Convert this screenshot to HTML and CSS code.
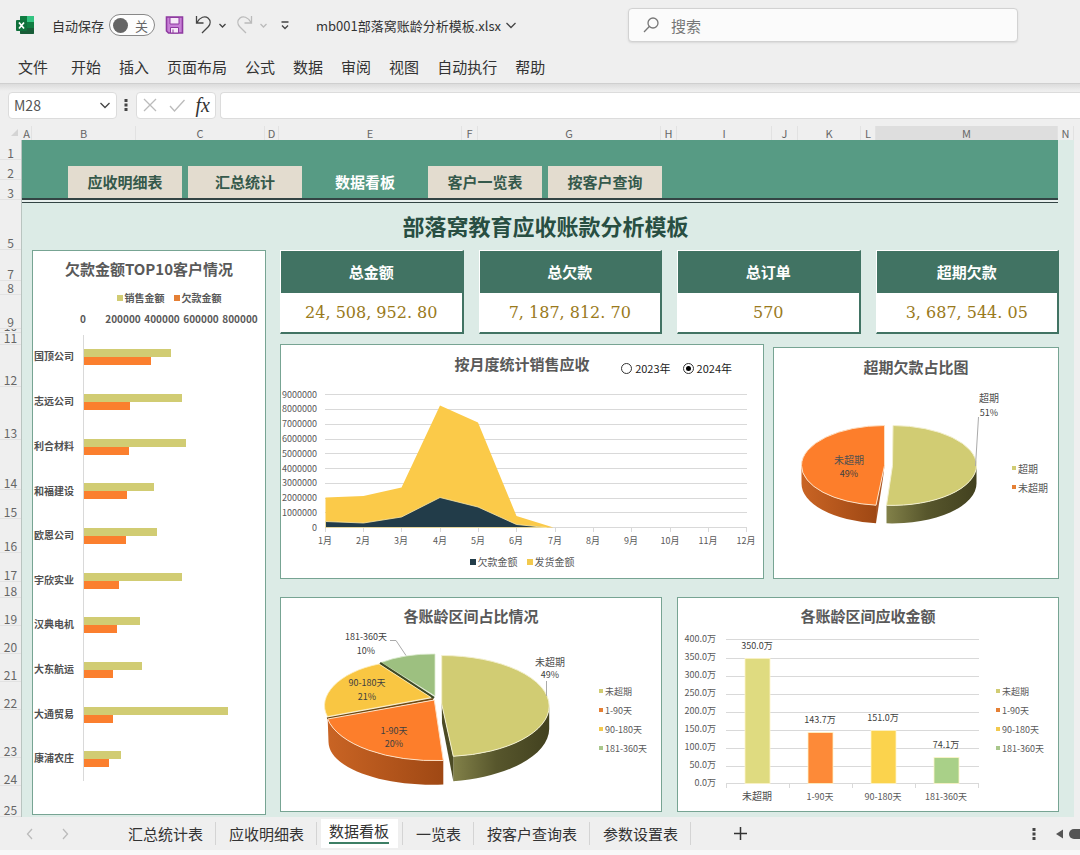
FILE: index.html
```html
<!DOCTYPE html>
<html lang="zh-CN">
<head>
<meta charset="utf-8">
<meta name="viewport" content="width=device-width, initial-scale=1">
<title>mb001部落窝账龄分析模板.xlsx</title>
<link rel="stylesheet" href="styles.css">
</head>
<body>
<header class="titlebar">
  <svg class="logo" width="18" height="18" viewBox="0 0 18 18" aria-hidden="true">
    <rect x="4" y="0" width="14" height="18" rx="1" fill="#21a366"/>
    <path d="M4 1q0-1 1-1h6v6H4z" fill="#107c41"/><path d="M11 0h6q1 0 1 1v5h-7z" fill="#33c481"/>
    <path d="M4 12h14v5q0 1-1 1H5q-1 0-1-1z" fill="#185c37"/><path d="M11 6h7v6h-7z" fill="#107c41"/>
    <rect x="0" y="4" width="11" height="11" rx="1" fill="#0f703b"/>
    <path d="M3 6.5l5 6M8 6.5l-5 6" stroke="#fff" stroke-width="1.7" fill="none"/>
  </svg>
  <label for="autosave" class="autosave">自动保存</label>
  <label class="toggle"><input type="checkbox" id="autosave"><span>关</span></label>
  <button class="icon" aria-label="保存"><svg width="20" height="20" viewBox="0 0 20 20"><path d="M1.5 2h16v16h-14l-2-2z" fill="#c77fd6" stroke="#8e3aa0" stroke-width="1.6"/><path d="M5 2.500h9v6.500H5z" fill="#f6eaf8" stroke="#8e3aa0"/><path d="M5.500 18v-5.500h8V18z" fill="#f6eaf8" stroke="#8e3aa0"/><path d="M8 14.500V18" stroke="#8e3aa0"/></svg></button>
  <button class="icon" aria-label="撤销"><svg width="22" height="22" viewBox="0 0 22 22" class="line"><path d="M2.500 2v7H9.500M3 8.500C6 3 11 1.500 14 4c3 2.500 2.500 6 .5 8.500L8 19"/></svg></button>
  <button class="icon" aria-label="撤销选项"><svg width="9" height="9" viewBox="0 0 9 9" class="line"><path d="M1.500 3l3 3 3-3"/></svg></button>
  <button class="icon" aria-label="恢复"><svg width="22" height="22" viewBox="0 0 22 22" class="line faded"><path d="M16.500 2v7H9.500M16 8.500C13 3 8 1.500 5 4c-3 2.500-2.500 6-.5 8.500L11 19"/></svg></button>
  <button class="icon" aria-label="恢复选项"><svg width="9" height="9" viewBox="0 0 9 9" class="line faded"><path d="M1.500 3l3 3 3-3"/></svg></button>
  <button class="icon" aria-label="自定义"><svg width="10" height="10" viewBox="0 0 10 10" class="line"><path d="M1.500 2h7M2 5.500l3 3 3-3"/></svg></button>
  <button class="filename">mb001部落窝账龄分析模板.xlsx<svg width="12" height="12" viewBox="0 0 12 12" class="line"><path d="M1.500 4l4.500 4.500L10.500 4"/></svg></button>
  <div class="search">
    <svg width="18" height="18" viewBox="0 0 18 18" class="line grey"><circle cx="11" cy="7" r="5"/><path d="M7.300 10.500L2 16"/></svg>
    <input type="search" placeholder="搜索" aria-label="搜索">
  </div>
</header>
<nav class="menu" aria-label="功能区">
  <button class="file">文件</button><button>开始</button><button>插入</button><button>页面布局</button><button>公式</button><button>数据</button><button>审阅</button><button>视图</button><button>自动执行</button><button>帮助</button>
</nav>
<div class="formulabar">
  <div class="namebox"><input type="text" value="M28" aria-label="名称框"><svg width="12" height="12" viewBox="0 0 12 12" class="line"><path d="M1.500 4l4.500 4.500L10.500 4"/></svg></div>
  <svg class="grip" width="4" height="14" viewBox="0 0 4 14" fill="#444"><path d="M.5 1h3v3h-3zM.5 5.500h3v3h-3zM.5 10h3v3h-3z"/></svg>
  <div class="fxbox">
    <button class="icon" aria-label="取消"><svg width="16" height="16" viewBox="0 0 16 16" class="line faded"><path d="M2 2l12 12M14 2L2 14"/></svg></button>
    <button class="icon" aria-label="输入"><svg width="18" height="16" viewBox="0 0 18 16" class="line faded"><path d="M2 9l4.500 5L16.500 3"/></svg></button>
    <button class="icon fx" aria-label="插入函数">fx</button>
  </div>
  <input class="formula" type="text" aria-label="编辑栏">
</div>

<main class="sheet">
  <div class="corner"><svg width="7" height="7" viewBox="0 0 7 7"><path d="M7 0v7H0z" fill="#d4d4d4"/></svg></div>
  <div class="cols"><span>A</span><span>B</span><span>C</span><span>D</span><span>E</span><span>F</span><span>G</span><span>H</span><span>I</span><span>J</span><span>K</span><span>L</span><span class="picked">M</span><span>N</span></div>
  <div class="rows"><span>1</span><span>2</span><span>3</span><span>5</span><span>7</span><span>8</span><span>9</span><span class="thin">10</span><span>11</span><span>12</span><span>13</span><span>14</span><span>15</span><span>16</span><span>17</span><span>18</span><span>19</span><span>20</span><span>21</span><span>22</span><span>23</span><span>24</span><span>25</span></div>
  <div class="canvas">
    <nav class="banner" aria-label="看板导航">
      <a href="#detail">应收明细表</a><a href="#summary">汇总统计</a><a href="#board" class="current">数据看板</a><a href="#clients">客户一览表</a><a href="#query">按客户查询</a>
    </nav>
    <h1>部落窝教育应收账款分析模板</h1>
    <div class="dashboard">
      <section class="panel top10">
        <h2>欠款金额TOP10客户情况</h2>
        <ul class="legend row bold"><li class="olive">销售金额</li><li class="orange">欠款金额</li></ul>
        <svg class="plot" viewBox="33 305 232 509" role="img" aria-label="欠款金额TOP10客户情况">
          <g class="num bold mid"><text x="83" y="323">0</text><text x="123" y="323">200000</text><text x="162" y="323">400000</text><text x="201" y="323">600000</text><text x="240" y="323">800000</text></g>
          <path d="M83.500 335V781" stroke="#d9d9d9"/>
          <g fill="#d1cc73"><rect x="84" y="349" width="87" height="8"/><rect x="84" y="394" width="98" height="8"/><rect x="84" y="439" width="102" height="8"/><rect x="84" y="483" width="70" height="8"/><rect x="84" y="528" width="73" height="8"/><rect x="84" y="573" width="98" height="8"/><rect x="84" y="617" width="56" height="8"/><rect x="84" y="662" width="58" height="8"/><rect x="84" y="707" width="144" height="8"/><rect x="84" y="751" width="37" height="8"/></g>
          <g fill="#fb7f2e"><rect x="84" y="357" width="67" height="8"/><rect x="84" y="402" width="46" height="8"/><rect x="84" y="447" width="45" height="8"/><rect x="84" y="491" width="43" height="8"/><rect x="84" y="536" width="42" height="8"/><rect x="84" y="581" width="35" height="8"/><rect x="84" y="625" width="33" height="8"/><rect x="84" y="670" width="29" height="8"/><rect x="84" y="715" width="29" height="8"/><rect x="84" y="759" width="25" height="8"/></g>
          <g class="cjk bold"><text x="34" y="360">国顶公司</text><text x="34" y="405">志远公司</text><text x="34" y="450">利合材料</text><text x="34" y="495">和福建设</text><text x="34" y="539">欧恩公司</text><text x="34" y="584">宇欣实业</text><text x="34" y="628">汉典电机</text><text x="34" y="673">大东航运</text><text x="34" y="718">大通贸易</text><text x="34" y="762">康浦农庄</text></g>
        </svg>
      </section>

      <div class="right">
        <div class="cards">
          <section class="card"><h3>总金额</h3><p>24, 508, 952. 80</p></section>
          <section class="card"><h3>总欠款</h3><p>7, 187, 812. 70</p></section>
          <section class="card"><h3>总订单</h3><p>570</p></section>
          <section class="card"><h3>超期欠款</h3><p>3, 687, 544. 05</p></section>
        </div>

        <div class="middle">
          <section class="panel">
            <div class="head">
              <h2>按月度统计销售应收</h2>
              <div class="years" role="radiogroup" aria-label="年份">
                <label><input type="radio" name="year">2023年</label>
                <label><input type="radio" name="year" checked>2024年</label>
              </div>
            </div>
            <svg class="plot" viewBox="281 383 482 167" role="img" aria-label="按月度统计销售应收">
              <path d="M325 394.500H747M325 409.500H747M325 424.500H747M325 439.500H747M325 453.500H747M325 468.500H747M325 483.500H747M325 498.500H747M325 512.500H747M325 527.500H747M325.500 528v4M363.500 528v4M401.500 528v4M440.500 528v4M478.500 528v4M516.500 528v4M555.500 528v4M593.500 528v4M631.500 528v4M670.500 528v4M708.500 528v4M746.500 528v4" stroke="#d9d9d9" fill="none"/>
              <path d="M325.500 497.500L363.500 496l38-8.500L440 405.500l38 17L516.500 516l37 11.500h-228z" fill="#fbca49"/>
              <path d="M325.500 521.500l38 1.500 38-6L440 497.500l38 9.500 38.500 17.500 30 3h-221z" fill="#223c49" stroke="#fbe9a8" stroke-width=".8"/>
              <g class="num end"><text x="317" y="398">9000000</text><text x="317" y="412">8000000</text><text x="317" y="427">7000000</text><text x="317" y="442">6000000</text><text x="317" y="457">5000000</text><text x="317" y="472">4000000</text><text x="317" y="486">3000000</text><text x="317" y="501">2000000</text><text x="317" y="516">1000000</text><text x="317" y="531">0</text></g>
              <g class="num mid"><text x="325" y="544">1月</text><text x="363" y="544">2月</text><text x="401" y="544">3月</text><text x="440" y="544">4月</text><text x="478" y="544">5月</text><text x="516" y="544">6月</text><text x="555" y="544">7月</text><text x="593" y="544">8月</text><text x="631" y="544">9月</text><text x="670" y="544">10月</text><text x="708" y="544">11月</text><text x="746" y="544">12月</text></g>
            </svg>
            <ul class="legend row"><li class="navy">欠款金额</li><li class="yellow">发货金额</li></ul>
          </section>

          <section class="panel ratio">
            <div class="head"><h2>超期欠款占比图</h2></div>
            <div class="split">
              <svg class="plot" viewBox="774 386 230 192" role="img" aria-label="超期欠款占比图">
                <defs>
                  <linearGradient id="oliveSide"><stop offset="0" stop-color="#828149"/><stop offset=".45" stop-color="#57562c"/><stop offset="1" stop-color="#42411f"/></linearGradient>
                  <linearGradient id="orangeSide"><stop offset="0" stop-color="#c96424"/><stop offset="1" stop-color="#9f4814"/></linearGradient>
                </defs>
                <path d="M976.500 465.500A84.500 40 0 0 1 886.500 505.300V523.300A84.500 40 0 0 0 976.500 483z" fill="url(#oliveSide)"/>
                <path d="M893 425.500A84.500 40 0 0 1 976.500 465.500A84.500 40 0 0 1 886.500 505.300L892.500 465.500z" fill="#d1cc73" stroke="#f3f0cf"/>
                <path d="M801.500 465.500A83 40 0 0 0 876 505.200V523.200A83 40 0 0 1 801.500 483z" fill="url(#orangeSide)"/>
                <path d="M884.500 465.500L876 505.200V523.200L883 478z" fill="#a85423"/>
                <path d="M884.500 425.500V465.500L876 505.200A83 40 0 0 1 801.500 465.500A83 40 0 0 1 884.500 425.500z" fill="#fd7e2b" stroke="#fde0c4"/>
                <path d="M978.500 417l-3 49" stroke="#aaa" fill="none"/>
                <g class="cjk mid"><text x="989" y="402">超期</text><text x="849" y="464">未超期</text></g>
                <g class="num mid dark"><text x="989" y="416">51%</text><text x="849" y="477">49%</text></g>
              </svg>
              <ul class="legend side"><li class="olive">超期</li><li class="orange">未超期</li></ul>
            </div>
          </section>
        </div>

        <div class="bottom">
          <section class="panel">
            <div class="head"><h2>各账龄区间占比情况</h2></div>
            <div class="split">
              <svg class="plot" viewBox="281 634 314 177" role="img" aria-label="各账龄区间占比情况">
                <path d="M381 662.500Q405 653.500 435 654V696z" fill="#9dc080" stroke="#dcebcf" stroke-width=".8"/>
                <path d="M380 663L434 698" stroke="#3e4a24" stroke-width="2.500"/>
                <path d="M327.500 716.500C316 696 339 672 379 664L431 697.500z" fill="#f9c642" stroke="#fdeebb" stroke-width=".8"/>
                <path d="M327 718.500L433 699" stroke="#6e4a12" stroke-width="2"/>
                <path d="M327.700 719A109 51 0 0 0 443.300 760.500V784.500C385 787 329 769 328.500 742z" fill="url(#orangeSide)"/>
                <path d="M434.300 700L443.300 760.500A109 51 0 0 1 327.700 719z" fill="#fd7e2b" stroke="#fde0c4"/>
                <path d="M549.200 706A107.500 50.500 0 0 1 453.300 756.300V781.300C510 777 549 754 549.200 729z" fill="url(#oliveSide)"/>
                <path d="M441.700 703L453.300 756.500V781L442 723z" fill="#4c4b25"/>
                <path d="M441.700 655.500A107.500 50.500 0 0 1 549.200 706A107.500 50.500 0 0 1 453.300 756.300L441.700 704z" fill="#d1cc73" stroke="#f3f0cf"/>
                <path d="M390 640.500h6l10 15M546.500 681v15" stroke="#aaa" fill="none"/>
                <g class="num mid dark"><text x="366" y="640">181-360天</text><text x="366" y="654">10%</text><text x="367" y="686">90-180天</text><text x="367" y="700">21%</text><text x="394" y="734">1-90天</text><text x="394" y="747">20%</text><text x="550" y="678">49%</text></g>
                <text class="cjk mid" x="550" y="666">未超期</text>
              </svg>
              <ul class="legend side"><li class="olive">未超期</li><li class="orange">1-90天</li><li class="yellow">90-180天</li><li class="green">181-360天</li></ul>
            </div>
          </section>

          <section class="panel">
            <div class="head"><h2>各账龄区间应收金额</h2></div>
            <div class="split">
              <svg class="plot" viewBox="678 634 314 177" role="img" aria-label="各账龄区间应收金额">
                <path d="M726 639.500H979M726 658.500H979M726 676.500H979M726 694.500H979M726 712.500H979M726 730.500H979M726 748.500H979M726 766.500H979M726 783.500H979M726.500 784v4M789.500 784v4M852.500 784v4M915.500 784v4M978.500 784v4" stroke="#d9d9d9" fill="none"/>
                <g stroke="#fff6c9" stroke-width=".8"><rect x="745" y="658.500" width="25" height="125" fill="#dfdb80"/><rect x="808" y="732.500" width="25" height="51" fill="#fd8a38"/><rect x="871" y="730.500" width="25" height="53" fill="#fbd34d"/><rect x="934" y="757.500" width="25" height="26" fill="#a9d088"/></g>
                <g class="num end"><text x="716" y="642">400.0万</text><text x="716" y="660">350.0万</text><text x="716" y="678">300.0万</text><text x="716" y="696">250.0万</text><text x="716" y="714">200.0万</text><text x="716" y="732">150.0万</text><text x="716" y="750">100.0万</text><text x="716" y="768">50.0万</text><text x="716" y="786">0.0万</text></g>
                <g class="num mid dark"><text x="757" y="649">350.0万</text><text x="820" y="723">143.7万</text><text x="883" y="721">151.0万</text><text x="946" y="748">74.1万</text></g>
                <g class="num mid"><text class="cjk" x="757" y="800">未超期</text><text x="820" y="800">1-90天</text><text x="883" y="800">90-180天</text><text x="946" y="800">181-360天</text></g>
              </svg>
              <ul class="legend side"><li class="olive">未超期</li><li class="orange">1-90天</li><li class="yellow">90-180天</li><li class="green">181-360天</li></ul>
            </div>
          </section>
        </div>
      </div>
    </div>
  </div>
</main>

<footer class="tabs">
  <button class="icon" aria-label="上一个"><svg width="8" height="12" viewBox="0 0 8 12" class="line faded"><path d="M6 1L1.500 6 6 11"/></svg></button>
  <button class="icon" aria-label="下一个"><svg width="8" height="12" viewBox="0 0 8 12" class="line faded"><path d="M2 1l4.500 5L2 11"/></svg></button>
  <nav class="tablist" aria-label="工作表">
    <button>汇总统计表</button><button>应收明细表</button><button class="active"><span>数据看板</span></button><button class="after">一览表</button><button>按客户查询表</button><button>参数设置表</button>
  </nav>
  <button class="icon add" aria-label="新建工作表"><svg width="13" height="13" viewBox="0 0 13 13" stroke="#333" stroke-width="1.500"><path d="M6.500 0v13M0 6.500h13"/></svg></button>
  <svg class="dots" width="4" height="14" viewBox="0 0 4 14" fill="#444"><path d="M.5 1h3v3h-3zM.5 5.500h3v3h-3zM.5 10h3v3h-3z"/></svg>
  <svg class="scroll" width="24" height="10" viewBox="0 0 24 10" fill="#555"><path d="M7 .5v9L0 5z"/><rect x="13" y="0" width="16" height="10" rx="5"/></svg>
</footer>
</body>
</html>
```
FILE: styles.css
```css
* { box-sizing: border-box; }
body {
  margin: 0;
  background: #f8f8f8;
  color: #333;
  font-family: "Noto Sans CJK SC", "Open Sans", sans-serif;
  font-size: 15px;
  overflow-x: hidden;
}
button, input { font: inherit; color: inherit; }
button { border: 0; padding: 0; background: none; white-space: nowrap; }
h1, h2, h3, p, ul { margin: 0; padding: 0; }
svg { display: block; flex: none; }
.icon { display: flex; align-items: center; }
.line { fill: none; stroke: #444; stroke-width: 1.3; }
.faded { stroke: #bbb; }
.grey { stroke: #777; }

/* Window chrome */
.titlebar {
  display: grid;
  grid-template-columns: 36px 57px 56px 29px 24px 17px 24px 21px 36px minmax(212px, 312px) minmax(120px, 390px);
  align-items: center;
  height: 50px;
  padding: 0 16px;
  background: #efefef;
  font-size: 13px;
}
.autosave { white-space: nowrap; }
.toggle {
  display: flex;
  align-items: center;
  gap: 7px;
  width: 46px;
  height: 22px;
  padding: 0 3px;
  border: 1px solid #888;
  border-radius: 11px;
  background: #fdfdfd;
  color: #666;
}
.toggle input {
  appearance: none;
  width: 15px;
  height: 15px;
  margin: 0;
  border-radius: 50%;
  background: #666;
}
.filename { display: flex; align-items: center; gap: 4px; }
.search {
  display: flex;
  align-items: center;
  gap: 11px;
  height: 34px;
  padding: 0 13px;
  border: 1px solid #d2d2d2;
  border-radius: 4px;
  background: #fbfbfb;
  box-shadow: 0 1px 2px #d8d8d8;
}
.search input { flex: 1; min-width: 0; padding: 0; border: 0; outline: 0; background: none; font-size: 15px; }
.search input::placeholder { color: #777; opacity: 1; }
.menu {
  display: flex;
  align-items: center;
  gap: 18px;
  height: 34px;
  padding-left: 18px;
  background: #efefef;
  border-bottom: 1px solid #cfcfcf;
}
.menu .file { margin-right: 5px; }
.formulabar {
  display: flex;
  align-items: center;
  height: 42px;
  padding-left: 8px;
  background: linear-gradient(#dcdcdc, #efefef 7px);
}
.namebox, .fxbox, .formula { height: 27px; border: 1px solid #dcdcdc; border-radius: 4px; background: #fff; }
.namebox { display: flex; align-items: center; width: 109px; padding: 0 5px; }
.namebox input { flex: 1; min-width: 0; padding: 0; border: 0; background: none; font-size: 14px; color: #555; }
.grip { margin: 0 6px 0 7px; }
.fxbox { display: flex; align-items: center; justify-content: space-between; width: 80px; margin-left: 2px; padding: 0 5px; }
.fx { font-family: "Liberation Serif", serif; font-style: italic; font-size: 20px; color: #333; }
.formula { flex: 1; min-width: 0; margin-left: 4px; border-right: 0; border-radius: 4px 0 0 4px; }

/* Worksheet grid */
.sheet { display: grid; grid-template-columns: 22px minmax(0, 1fr); padding-right: 6px; background: #efefef; }
.corner { display: flex; justify-content: flex-end; align-items: flex-end; padding: 0 4px 4px 0; }
.cols {
  display: grid;
  grid-template-columns: 10fr 104fr 129fr 14fr 183fr 16fr 183fr 16fr 95fr 26fr 63fr 15fr 182fr 16fr;
  height: 14px;
  font-size: 11px;
  line-height: 15px;
  color: #666;
}
.cols span { display: flex; justify-content: center; min-width: 0; border-right: 1px solid #e2e2e2; }
.cols .picked { background: #dedede; border-bottom: 2px solid #3d7f65; }
.rows {
  display: grid;
  grid-template-rows: 20px 20px 20px 50px 31px 14px 34px 4px 12px 42px 53px 50px 29px 34px 29px 16px 28px 28px 28px 28px 48px 28px minmax(28px, 1fr);
  border-right: 1px solid #b9c4c0;
  font-size: 12px;
  line-height: 12px;
  color: #666;
  text-align: center;
}
.rows span { display: flex; align-items: flex-end; justify-content: center; min-height: 0; border-bottom: 1px solid #e2e2e2; }
.rows .thin { overflow: hidden; }
.canvas { background: #dcebe6; min-width: 0; }
.banner {
  display: flex;
  align-items: flex-end;
  gap: 6px;
  height: 63px;
  margin-right: 16px;
  padding: 0 46px 4px;
  background: linear-gradient(#579b84 58px, #344 58px, #344 60px, #e8f0ee 60px, #e8f0ee 62px, #344 62px);
}
.banner a {
  width: 114px;
  height: 33px;
  padding-bottom: 1px;
  background: #e3dccf;
  background-clip: content-box;
  color: #35594b;
  font-weight: bold;
  line-height: 32px;
  text-align: center;
  text-decoration: none;
  white-space: nowrap;
}
.banner .current { background: none; color: #fff; }
h1 { padding: 0 15px 0 10px; color: #284e42; font-size: 22px; line-height: 44px; padding-bottom: 3px; text-align: center; }
.dashboard { display: grid; grid-template-columns: 234fr 779fr; gap: 14px; padding: 0 15px 2px 10px; }
.right { min-width: 0; }
.cards { display: grid; grid-template-columns: repeat(4, minmax(0, 1fr)); gap: 15px; }
.middle { display: grid; grid-template-columns: 484fr 286fr; align-items: end; gap: 9px; margin-top: 10px; }
.bottom { display: grid; grid-template-columns: repeat(2, minmax(0, 1fr)); gap: 15px; margin-top: 18px; }
.card { border: 1px solid #fff; border-right: 2px solid #417363; border-bottom: 2px solid #417363; background: #fff; text-align: center; }
.card h3 { background: #417363; color: #fff; font-size: 15px; line-height: 42px; }
.card p { color: #9a7a1c; font: 16px/39px "DejaVu Serif", serif; white-space: nowrap; }

/* Chart panels */
.panel { min-width: 0; border: 1px solid #77a493; background: #fff; }
.panel h2 { color: #595959; font-size: 15px; line-height: 20px; text-align: center; white-space: nowrap; }
.top10 { padding-top: 8px; }
.top10 .legend { padding: 12px 0 0 40px; }
.head { display: grid; grid-template-columns: 1fr auto 1fr; align-items: center; height: 38px; }
.head h2 { grid-column: 2; }
.bottom .head { height: 36px; }
.years { display: flex; justify-content: flex-end; gap: 12px; padding: 8px 31px 0 0; color: #222; font-size: 11px; line-height: 14px; }
.years label { display: flex; align-items: center; gap: 3px; white-space: nowrap; }
.years input {
  appearance: none;
  width: 11px;
  height: 11px;
  margin: 0;
  padding: 2px;
  border: 1px solid #333;
  border-radius: 50%;
}
.years input:checked { background: #000 content-box; }
.plot { width: 100%; height: auto; overflow: visible; }
.split { display: flex; align-items: center; }
.split .plot { flex: 1 1 0; width: auto; min-width: 0; }
.legend { list-style: none; color: #595959; font-size: 10px; line-height: 14px; }
.legend li { display: flex; align-items: center; gap: 2px; white-space: nowrap; }
.legend li::before { content: ""; width: 6px; height: 6px; background: currentColor; }
.legend.row { display: flex; justify-content: center; gap: 9px; }
.legend.row:last-child { padding: 5px 0 9px; }
.legend.side { width: 66px; padding: 0 0 6px 4px; font-size: 9px; line-height: 19px; }
.legend.side li::before { width: 4px; height: 4px; }
.ratio .legend.side { width: 54px; padding: 0 0 9px 8px; font-size: 10px; }
.legend .olive::before { background: #d1cc73; }
.legend .orange::before { background: #e58035; }
.legend .yellow::before { background: #f2c94e; }
.legend .green::before { background: #a9c78c; }
.legend .navy::before { background: #223c49; }
.num { fill: #595959; font-size: 9px; }
.cjk { fill: #505050; font-size: 10px; }
.dark { fill: #404040; }
.mid { text-anchor: middle; }
.end { text-anchor: end; }
.bold { font-weight: bold; }
.num.bold { font-size: 10px; }

/* Sheet tabs */
.tabs { display: flex; align-items: center; height: 33px; padding-left: 26px; background: #efefef; }
.tabs > .icon { width: 35px; }
.tablist { display: flex; align-items: center; margin-left: 19px; }
.tablist button { height: 23px; padding: 0 12px 0 13px; border-right: 1px solid #d4d4d4; line-height: 23px; }
.tablist .active { height: 29px; margin: 0 4px; padding: 0 9px 4px 8px; border: 0; background: #fff; }
.active span { display: block; border-bottom: 2px solid #3d7f65; }
.tablist .after { border-left: 1px solid #d4d4d4; }
.tabs > .add { margin-left: 43px; }
.dots { margin-left: auto; }
.scroll { margin-left: 20px; }
```
